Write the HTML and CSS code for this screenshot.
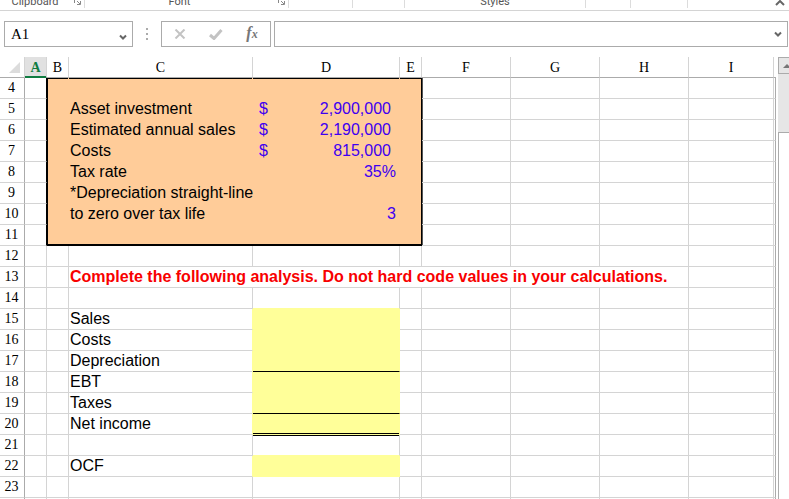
FILE: index.html
```
<!DOCTYPE html>
<html lang="en">
<head>
    <meta charset="UTF-8">
    <meta name="viewport" content="width=device-width, initial-scale=1.0">
    <title>Spreadsheet</title>
    <link rel="stylesheet" href="styles.css">
</head>
<body>

<header class="ribbon">
    <div class="group clipboard">
        <span class="label">Clipboard</span>
        <button class="launcher" aria-label="Clipboard settings"><svg width="7" height="7" viewBox="0 0 7 7"><path d="M.5 5V.5H5M3 3l3 3M6.500 3v3.500H3" /></svg></button>
    </div>
    <div class="group font">
        <span class="label">Font</span>
        <button class="launcher" aria-label="Font settings"><svg width="7" height="7" viewBox="0 0 7 7"><path d="M.5 5V.5H5M3 3l3 3M6.500 3v3.500H3" /></svg></button>
    </div>
    <div class="group alignment"></div>
    <div class="group number"></div>
    <div class="group style-group"><span class="label">Styles</span></div>
    <div class="group cells"></div>
    <div class="group editing"></div>
    <button class="collapse" aria-label="Collapse ribbon"><svg width="10" height="6" viewBox="0 0 10 6"><path d="M1 5l4-4 4 4" /></svg></button>
</header>

<div class="formula-bar">
    <div class="name-box">
        <input type="text" class="name-input" value="A1" aria-label="Name box">
        <button class="arrow" aria-label="Show names"><svg width="8" height="7" viewBox="0 0 8 7"><path d="M1 1.500l3 3 3-3" /></svg></button>
    </div>
    <div class="dots"><svg width="2" height="12" viewBox="0 0 2 12"><path d="M0 1h2M0 6h2M0 11h2" /></svg></div>
    <div class="tools">
        <button aria-label="Cancel"><svg width="12" height="10" viewBox="0 0 12 10"><path d="M1.500 .5l9 9M10.500 .5l-9 9" /></svg></button>
        <button class="check" aria-label="Enter"><svg width="14" height="11" viewBox="0 0 14 11"><path d="M1 6l4 3.500L12.500 1" /></svg></button>
        <button class="fx" aria-label="Insert function"><i>f</i><i class="x">x</i></button>
    </div>
    <div class="formula">
        <input type="text" class="formula-input" aria-label="Formula">
        <button class="arrow" aria-label="Expand formula bar"><svg width="8" height="7" viewBox="0 0 8 7"><path d="M1 1.500l3 3 3-3" /></svg></button>
    </div>
</div>

<main class="sheet">
    <table class="grid">
        <colgroup>
            <col class="w-head"><col class="w-narrow"><col class="w-narrow"><col class="w-c"><col class="w-d"><col class="w-narrow"><col class="w-wide"><col class="w-wide"><col class="w-wide"><col><col class="w-edge">
        </colgroup>
        <thead>
            <tr>
                <th class="corner"><svg width="11" height="11" viewBox="0 0 11 11"><path d="M11 0v11H0z" /></svg></th>
                <th class="active">A</th><th>B</th><th>C</th><th>D</th><th>E</th><th>F</th><th>G</th><th>H</th><th>I</th><th class="edge"></th>
            </tr>
        </thead>
        <tbody>
            <tr class="box first"><th>4</th><td></td><td></td><td></td><td></td><td></td><td></td><td></td><td></td><td></td><td></td></tr>
            <tr class="box"><th>5</th><td></td><td></td><td>Asset investment</td><td><div class="money"><span>$</span><span>2,900,000</span></div></td><td></td><td></td><td></td><td></td><td></td><td></td></tr>
            <tr class="box"><th>6</th><td></td><td></td><td>Estimated annual sales</td><td><div class="money"><span>$</span><span>2,190,000</span></div></td><td></td><td></td><td></td><td></td><td></td><td></td></tr>
            <tr class="box"><th>7</th><td></td><td></td><td>Costs</td><td><div class="money"><span>$</span><span>815,000</span></div></td><td></td><td></td><td></td><td></td><td></td><td></td></tr>
            <tr class="box"><th>8</th><td></td><td></td><td>Tax rate</td><td class="value">35%</td><td></td><td></td><td></td><td></td><td></td><td></td></tr>
            <tr class="box"><th>9</th><td></td><td></td><td>*Depreciation straight-line</td><td></td><td></td><td></td><td></td><td></td><td></td><td></td></tr>
            <tr class="box"><th>10</th><td></td><td></td><td>to zero over tax life</td><td class="value">3</td><td></td><td></td><td></td><td></td><td></td><td></td></tr>
            <tr class="box last"><th>11</th><td></td><td></td><td></td><td></td><td></td><td></td><td></td><td></td><td></td><td></td></tr>
            <tr><th>12</th><td></td><td></td><td></td><td></td><td></td><td></td><td></td><td></td><td></td><td></td></tr>
            <tr><th>13</th><td></td><td></td><td colspan="6" class="notice">Complete the following analysis. Do not hard code values in your calculations.</td><td></td><td></td></tr>
            <tr class="above-answer"><th>14</th><td></td><td></td><td></td><td></td><td></td><td></td><td></td><td></td><td></td><td></td></tr>
            <tr class="answer"><th>15</th><td></td><td></td><td>Sales</td><td></td><td></td><td></td><td></td><td></td><td></td><td></td></tr>
            <tr class="answer"><th>16</th><td></td><td></td><td>Costs</td><td></td><td></td><td></td><td></td><td></td><td></td><td></td></tr>
            <tr class="answer sum"><th>17</th><td></td><td></td><td>Depreciation</td><td></td><td></td><td></td><td></td><td></td><td></td><td></td></tr>
            <tr class="answer"><th>18</th><td></td><td></td><td>EBT</td><td></td><td></td><td></td><td></td><td></td><td></td><td></td></tr>
            <tr class="answer sum"><th>19</th><td></td><td></td><td>Taxes</td><td></td><td></td><td></td><td></td><td></td><td></td><td></td></tr>
            <tr class="answer total"><th>20</th><td></td><td></td><td>Net income</td><td></td><td></td><td></td><td></td><td></td><td></td><td></td></tr>
            <tr class="above-answer after-total"><th>21</th><td></td><td></td><td></td><td></td><td></td><td></td><td></td><td></td><td></td><td></td></tr>
            <tr class="answer"><th>22</th><td></td><td></td><td>OCF</td><td></td><td></td><td></td><td></td><td></td><td></td><td></td></tr>
            <tr><th>23</th><td></td><td></td><td></td><td></td><td></td><td></td><td></td><td></td><td></td><td></td></tr>
            <tr><th></th><td></td><td></td><td></td><td></td><td></td><td></td><td></td><td></td><td></td><td></td></tr>
        </tbody>
    </table>
    <div class="scrollbar">
        <button class="up" aria-label="Scroll up"><svg width="8" height="4" viewBox="0 0 8 4"><path d="M4 0l4 4H0z" /></svg></button>
        <div class="thumb"></div>
    </div>
</main>

</body>
</html>
```

FILE: styles.css
```
* {
    margin: 0;
    padding: 0;
    box-sizing: border-box;
}

body {
    display: flex;
    flex-direction: column;
    height: 100vh;
    overflow: hidden;
    background: white;
    font-family: "Liberation Sans", Arial, sans-serif;
    font-size: 16px;
}

button {
    display: flex;
    align-items: center;
    justify-content: center;
    background: none;
    border: none;
}

input {
    min-width: 0;
    flex: 1;
    border: none;
    outline: none;
    background: none;
}

svg {
    display: block;
    fill: none;
    stroke: #666;
}

/* Ribbon */
.ribbon {
    display: flex;
    flex: none;
    align-items: flex-start;
    height: 11px;
    overflow: hidden;
    border-bottom: 1px solid #d4d4d4;
}

.group {
    display: flex;
    flex: none;
    align-items: flex-end;
    height: 8px;
    border-right: 1px solid #dcdcdc;
    font-family: Roboto, sans-serif;
    font-size: 11px;
    line-height: 12px;
    color: #555;
}

.clipboard {
    width: 85px;
}

.font {
    width: 204px;
}

.alignment {
    width: 64px;
}

.number {
    width: 52px;
}

.style-group {
    width: 181px;
}

.cells {
    width: 45px;
}

.editing {
    width: 57px;
}

.label {
    flex: 1;
    text-align: center;
}

.launcher {
    width: 14px;
    padding-bottom: 3px;
}

.launcher svg {
    stroke: #888;
}

.collapse {
    margin-left: auto;
    padding-right: 4px;
}

.collapse svg {
    stroke-width: 2;
}

/* Formula bar */
.formula-bar {
    display: flex;
    flex: none;
    height: 46px;
    padding: 10px 1px 10px 4px;
}

.name-box,
.tools,
.formula {
    display: flex;
    border: 1px solid #ababab;
}

.name-box {
    width: 129px;
}

.name-input {
    padding-left: 6px;
    font-family: "Liberation Serif", serif;
    font-size: 15px;
}

.arrow {
    width: 18px;
}

.arrow svg {
    stroke-width: 2;
}

.name-box .arrow {
    padding-top: 6px;
}

.dots {
    display: flex;
    align-items: center;
    justify-content: center;
    width: 28px;
}

.dots svg {
    stroke: #ababab;
    stroke-width: 2;
}

.tools {
    width: 110px;
    margin-right: 3px;
}

.tools button {
    flex: 1;
}

.tools svg {
    stroke: #c3c3c3;
    stroke-width: 2;
}

.tools .check svg {
    stroke-width: 3;
}

.fx {
    align-items: baseline;
    font-family: "Liberation Serif", serif;
    font-size: 16px;
    line-height: 22px;
    font-weight: bold;
    color: #777;
}

.fx .x {
    font-size: 12px;
}

.formula {
    flex: 1;
}

/* Sheet */
.sheet {
    display: flex;
    flex: 1;
    min-height: 0;
    overflow: hidden;
}

.grid {
    flex: 1;
    align-self: flex-start;
    min-width: 0;
    table-layout: fixed;
    border-spacing: 0;
    width: 100%;
}

.w-head {
    width: 25px;
}

.w-narrow {
    width: 22px;
}

.w-c {
    width: 184px;
}

.w-d {
    width: 147px;
}

.w-wide {
    width: 89px;
}

.w-edge {
    width: 2px;
}

.grid th,
.grid td {
    height: 21px;
    border-right: 1px solid #d4d4d4;
    border-bottom: 1px solid #d4d4d4;
    line-height: 20px;
    white-space: nowrap;
}

.grid td {
    text-align: left;
}

.grid td:nth-child(4) {
    padding-left: 1px;
}

.grid th {
    font-family: "Liberation Serif", serif;
    font-size: 14px;
    font-weight: normal;
}

.grid tbody th {
    padding-right: 1px;
    border-right-color: #ababab;
}

.grid td:last-child {
    border-right-color: #ababab;
}

.grid thead th {
    padding-top: 1px;
    line-height: 19px;
    border-bottom-color: #ababab;
}

.grid thead .active {
    background: #e1e1e1;
    border-bottom-color: #107c41;
    box-shadow: inset 0 -1px #107c41;
    font-weight: bold;
    color: #107c41;
}

.grid thead .edge {
    border-right: none;
}

.corner svg {
    margin: 0 4px 0 auto;
    fill: #dcdcdc;
    stroke: none;
}

/* Input data box, columns B to E */
.grid .box td:nth-child(n+3):nth-child(-n+6) {
    background-color: #ffcc99;
    background-repeat: no-repeat;
    background-origin: border-box;
    border-color: transparent;
}

.grid .box td:nth-child(2) {
    border-right-color: #000;
}

.grid .box td:nth-child(3) {
    background-image: linear-gradient(#000, #000);
    background-size: 1px 100%;
}

.grid .box td:nth-child(6) {
    background-image: linear-gradient(#000, #000);
    background-position: right;
    background-size: 1px 100%;
}

.grid .box td:nth-child(7) {
    background: linear-gradient(#555, #555) 0 0 / 1px 100% no-repeat;
}

.first td:nth-child(n+3):nth-child(-n+6) {
    box-shadow: inset 0 1px #000;
}

.grid .last td:nth-child(4),
.grid .last td:nth-child(5) {
    background-image: linear-gradient(#000, #000);
    background-position: bottom;
    background-size: 100% 2px;
}

.grid .last td:nth-child(3) {
    background-image: linear-gradient(#000, #000), linear-gradient(#000, #000);
    background-position: left, bottom;
    background-size: 1px 100%, 100% 2px;
}

.grid .last td:nth-child(6) {
    background-image: linear-gradient(#000, #000), linear-gradient(#000, #000);
    background-position: right, bottom;
    background-size: 1px 100%, 100% 2px;
}

.money {
    display: flex;
    justify-content: space-between;
    padding: 0 8px 0 6px;
    color: #4000f0;
}

.grid .value {
    padding-right: 3px;
    text-align: right;
    color: #4000f0;
}

.notice {
    font-weight: bold;
    color: #f80000;
}

/* Cells to fill in, column D */
.answer td:nth-child(4) {
    border-right-color: #ffff99;
}

.answer td:nth-child(5) {
    background: #ffff99;
    border-color: #ffff99;
}

.above-answer td:nth-child(5) {
    border-bottom-color: #ffff99;
}

.grid .sum td:nth-child(5) {
    border-bottom-color: #000;
}

.total td:nth-child(5) {
    box-shadow: inset 0 -1px #000;
}

.after-total td:nth-child(5) {
    box-shadow: inset 0 1px #000;
}

/* Scrollbar */
.scrollbar {
    display: flex;
    flex: none;
    flex-direction: column;
    width: 11px;
    margin-left: 2px;
    overflow: hidden;
    background: #e6e6e6;
}

.up {
    flex: none;
    width: 17px;
    height: 17px;
    border: 1px solid #ababab;
}

.up svg {
    fill: #777;
    stroke: none;
}

.thumb {
    flex: 1;
    width: 17px;
    margin-top: 58px;
    border: 1px solid #ababab;
    border-bottom: none;
    background: white;
}
```
